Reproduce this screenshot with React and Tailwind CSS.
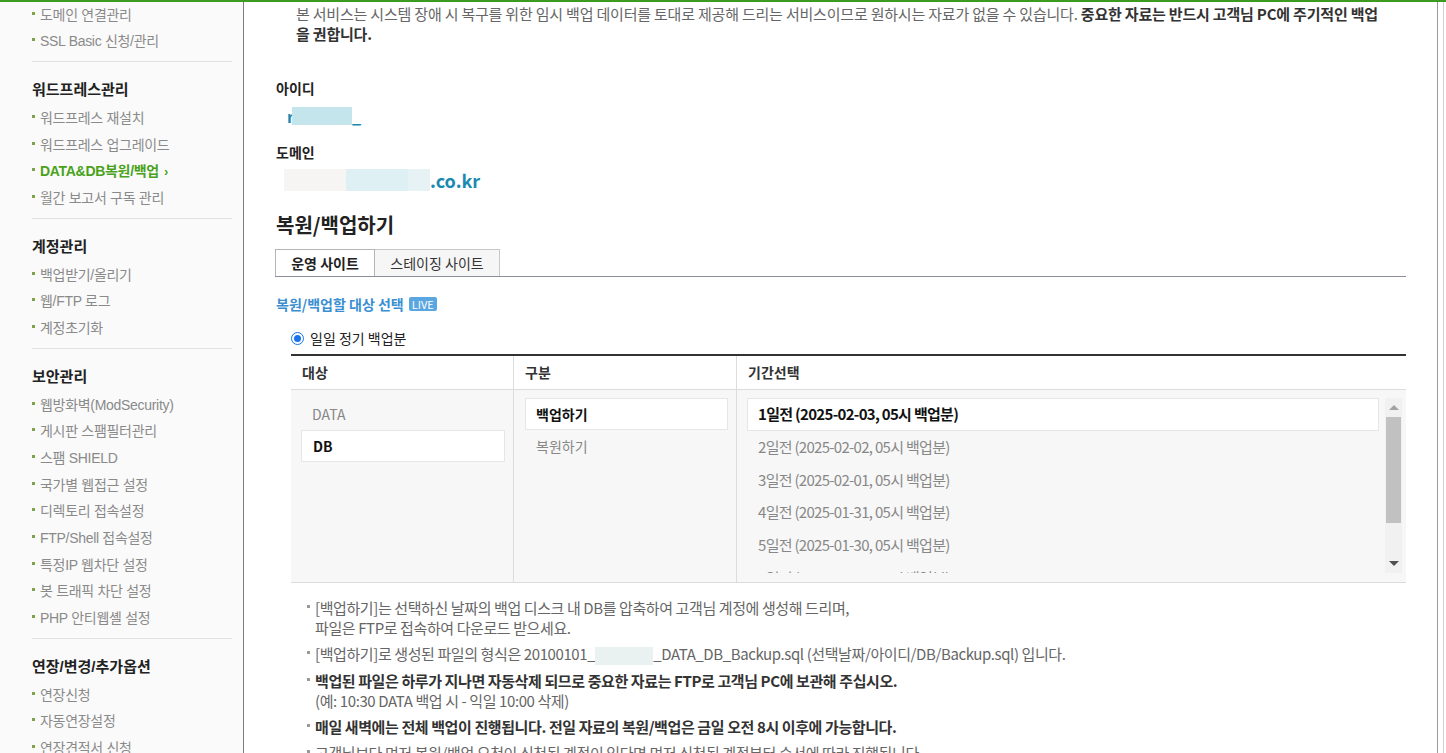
const SIDE = [
  {
    head: null,
    items: ['도메인 연결관리', 'SSL Basic 신청/관리'],
  },
  {
    head: '워드프레스관리',
    items: ['워드프레스 재설치', '워드프레스 업그레이드', { label: 'DATA&DB복원/백업', active: true }, '월간 보고서 구독 관리'],
  },
  {
    head: '계정관리',
    items: ['백업받기/올리기', '웹/FTP 로그', '계정초기화'],
  },
  {
    head: '보안관리',
    items: [
      '웹방화벽(ModSecurity)',
      '게시판 스팸필터관리',
      '스팸 SHIELD',
      '국가별 웹접근 설정',
      '디렉토리 접속설정',
      'FTP/Shell 접속설정',
      '특정IP 웹차단 설정',
      '봇 트래픽 차단 설정',
      'PHP 안티웹셸 설정',
    ],
  },
  {
    head: '연장/변경/추가옵션',
    items: ['연장신청', '자동연장설정', '연장견적서 신청'],
  },
];

const PERIODS = [
  '1일전 (2025-02-03, 05시 백업분)',
  '2일전 (2025-02-02, 05시 백업분)',
  '3일전 (2025-02-01, 05시 백업분)',
  '4일전 (2025-01-31, 05시 백업분)',
  '5일전 (2025-01-30, 05시 백업분)',
  '6일전 (2025-01-29, 05시 백업분)',
];

function Sidebar() {
  return (
    <aside className="w-[244px] shrink-0 bg-[#fafafa] border-r border-[#7d7d7d] pl-[32px] pr-[11px] font-['Liberation_Sans','Noto_Sans_CJK_KR',sans-serif]">
      {SIDE.map((g, gi) => (
        <div key={gi}>
          {gi > 0 && <div className="mt-[6px] border-t border-[#e2e2e2]" />}
          {g.head && (
            <div className="mt-[14px] h-[27px] leading-[27px] text-[15px] font-bold text-[#222]">{g.head}</div>
          )}
          <ul className={g.head ? 'mt-[2px]' : ''}>
            {g.items.map((it) => {
              const item = typeof it === 'string' ? { label: it } : it;
              return (
                <li key={item.label} className="h-[26.67px] flex items-center">
                  <span className="w-[3px] h-[3px] bg-[#7fa34c] mr-[5px] -mt-[4px]" />
                  {item.active ? (
                    <span className="text-[14px] font-bold text-[#4aa21c] tracking-[-0.3px] flex items-center">
                      {item.label}
                      <span className="ml-[5px] text-[13px] font-bold leading-none">›</span>
                    </span>
                  ) : (
                    <span className="text-[14px] text-[#8a8a8a] tracking-[-0.3px]">{item.label}</span>
                  )}
                </li>
              );
            })}
          </ul>
        </div>
      ))}
    </aside>
  );
}

function Radio() {
  return (
    <span className="w-[13px] h-[13px] rounded-full border-[1.5px] border-[#1a73e8] flex items-center justify-center">
      <span className="w-[7px] h-[7px] rounded-full bg-[#1a73e8]" />
    </span>
  );
}

function Scrollbar() {
  return (
    <div className="w-[17px] h-[175px] shrink-0 bg-[#f1f1f1] flex flex-col items-center">
      <div className="h-[19px] flex items-center justify-center">
        <span className="w-0 h-0 border-l-[5px] border-r-[5px] border-b-[5px] border-l-transparent border-r-transparent border-b-[#a3a3a3]" />
      </div>
      <div className="w-[15px] h-[106px] bg-[#c1c1c1]" />
      <div className="flex-1" />
      <div className="h-[19px] flex items-center justify-center">
        <span className="w-0 h-0 border-l-[5px] border-r-[5px] border-t-[5px] border-l-transparent border-r-transparent border-t-[#505050]" />
      </div>
    </div>
  );
}

function BackupTable() {
  return (
    <div className="ml-[15px] mt-[6px] border-t-2 border-[#333] border-b border-b-[#dcdcdc] font-['Noto_Sans_CJK_KR',sans-serif]">
      <div className="grid grid-cols-[222px_223px_1fr] h-[34px] border-b border-[#dcdcdc] text-[14px] font-bold text-[#333]">
        <div className="pl-[11px] flex items-center">대상</div>
        <div className="pl-[11px] flex items-center border-l border-[#dcdcdc]">구분</div>
        <div className="pl-[11px] flex items-center border-l border-[#dcdcdc]">기간선택</div>
      </div>
      <div className="grid grid-cols-[222px_223px_1fr] grid-rows-[192px] bg-[#f7f7f7] text-[14px]">
        <div className="pt-[8px] pl-[10px] pr-[8px]">
          <div className="h-[32px] flex items-center pl-[11px] text-[#888]">DATA</div>
          <div className="h-[32px] flex items-center pl-[11px] bg-white border border-[#e6e6e6] font-bold text-[#111]">DB</div>
        </div>
        <div className="pt-[8px] pl-[11px] pr-[8px] border-l border-[#dcdcdc]">
          <div className="h-[32px] flex items-center pl-[10px] bg-white border border-[#e6e6e6] font-bold text-[#111]">백업하기</div>
          <div className="h-[32px] flex items-center pl-[11px] text-[#888]">복원하기</div>
        </div>
        <div className="pt-[8px] pl-[10px] pr-[4px] border-l border-[#dcdcdc] flex items-start">
          <div className="flex-1 h-[175px] overflow-hidden pr-[6px] text-[15px] tracking-[-0.7px]">
            {PERIODS.map((p, i) =>
              i === 0 ? (
                <div key={p} className="h-[32.75px] flex items-center pl-[10px] bg-white border border-[#e6e6e6] font-bold text-[#111]">
                  {p}
                </div>
              ) : (
                <div key={p} className="h-[32.75px] flex items-center pl-[11px] text-[#888]">
                  {p}
                </div>
              )
            )}
          </div>
          <Scrollbar />
        </div>
      </div>
    </div>
  );
}

function Note({ bold, children }) {
  return (
    <li className="flex mb-[6px]">
      <span className="w-[3px] h-[3px] bg-[#999] mt-[7px] mr-[5px] shrink-0" />
      <div className={bold ? 'font-bold text-[#333]' : 'text-[#666]'}>{children}</div>
    </li>
  );
}

export default function App() {
  return (
    <div className="h-[753px] overflow-hidden bg-white border-t-2 border-[#3c9a1e] flex">
      <Sidebar />
      <main className="flex-1 pl-[32px] pr-[31px] font-['Noto_Sans_CJK_KR',sans-serif]">
        <p className="pt-[2px] pl-[20px] text-[15px] leading-[20px] text-[#666] tracking-[-0.2px] whitespace-nowrap">
          본 서비스는 시스템 장애 시 복구를 위한 임시 백업 데이터를 토대로 제공해 드리는 서비스이므로 원하시는 자료가 없을 수 있습니다.{' '}
          <b className="text-[#333]">중요한 자료는 반드시 고객님 PC에 주기적인 백업</b>
          <br />
          <b className="text-[#333]">을 권합니다.</b>
        </p>

        <div className="mt-[34px] text-[14px] leading-[20px] font-bold text-[#222]">아이디</div>
        <div className="mt-[8px] h-[20px] flex items-center pl-[11px] text-[16px] font-bold text-[#1a8ab0]">
          <span>r</span>
          <span className="w-[60px] h-[18px] bg-[#c5e5ec] -ml-[2px]" />
          <span>_</span>
        </div>

        <div className="mt-[16px] text-[14px] leading-[20px] font-bold text-[#222]">도메인</div>
        <div className="mt-[6px] h-[24px] flex items-center pl-[8px] text-[18px] font-bold text-[#1a8ab0]">
          <span className="w-[62px] h-[22px] bg-[#f7f5f4]" />
          <span className="w-[62px] h-[22px] bg-[#dff0f5]" />
          <span className="w-[22px] h-[22px] bg-[#e6f2f4]" />
          <span>.co.kr</span>
        </div>

        <h2 className="mt-[19px] text-[20px] leading-[28px] font-bold text-[#222]">복원/백업하기</h2>

        <div className="mt-[10px] -ml-px flex border-b border-[#8a8f99] w-[1131px]">
          <div className="w-[100px] h-[27px] -mb-px bg-white border border-b-0 border-[#b5b5b5] flex items-center justify-center text-[14px] font-bold text-[#222]">
            운영 사이트
          </div>
          <div className="w-[125px] h-[27px] bg-[#f6f6f6] border border-l-0 border-b-0 border-[#c8c8c8] flex items-center justify-center text-[14px] text-[#333]">
            스테이징 사이트
          </div>
        </div>

        <div className="mt-[17px] h-[20px] flex items-center text-[14px] font-bold text-[#3a8fd2]">
          복원/백업할 대상 선택
          <span className="ml-[5px] px-[3px] h-[14px] leading-[14px] rounded-[2px] bg-[#5aa6e0] text-white text-[11px] font-normal">LIVE</span>
        </div>

        <label className="mt-[14px] h-[20px] pl-[15px] flex items-center gap-[6px] text-[14px] text-[#222]">
          <Radio />
          일일 정기 백업분
        </label>

        <div className="w-[1130px]">
          <BackupTable />
        </div>

        <ul className="mt-[15px] pl-[31px] text-[15px] leading-[20px] tracking-[-0.4px] whitespace-nowrap">
          <Note>
            [백업하기]는 선택하신 날짜의 백업 디스크 내 DB를 압축하여 고객님 계정에 생성해 드리며,
            <br />
            파일은 FTP로 접속하여 다운로드 받으세요.
          </Note>
          <Note>
            [백업하기]로 생성된 파일의 형식은 20100101_
            <span className="inline-block w-[58px] h-[18px] align-middle bg-[#eaf1f1]" />
            _DATA_DB_Backup.sql (선택날짜/아이디/DB/Backup.sql) 입니다.
          </Note>
          <Note bold>
            백업된 파일은 하루가 지나면 자동삭제 되므로 중요한 자료는 FTP로 고객님 PC에 보관해 주십시오.
            <br />
            <span className="font-normal text-[#666]">(예: 10:30 DATA 백업 시 - 익일 10:00 삭제)</span>
          </Note>
          <Note bold>매일 새벽에는 전체 백업이 진행됩니다. 전일 자료의 복원/백업은 금일 오전 8시 이후에 가능합니다.</Note>
          <Note>고객님보다 먼저 복원/백업 요청이 신청된 계정이 있다면 먼저 신청된 계정부터 순서에 따라 진행됩니다.</Note>
        </ul>
      </main>
      <div className="w-[9px] shrink-0 border-l border-[#9a9a9a] flex">
        <div className="ml-[5px] border-l border-[#d0d0d0]" />
      </div>
    </div>
  );
}
